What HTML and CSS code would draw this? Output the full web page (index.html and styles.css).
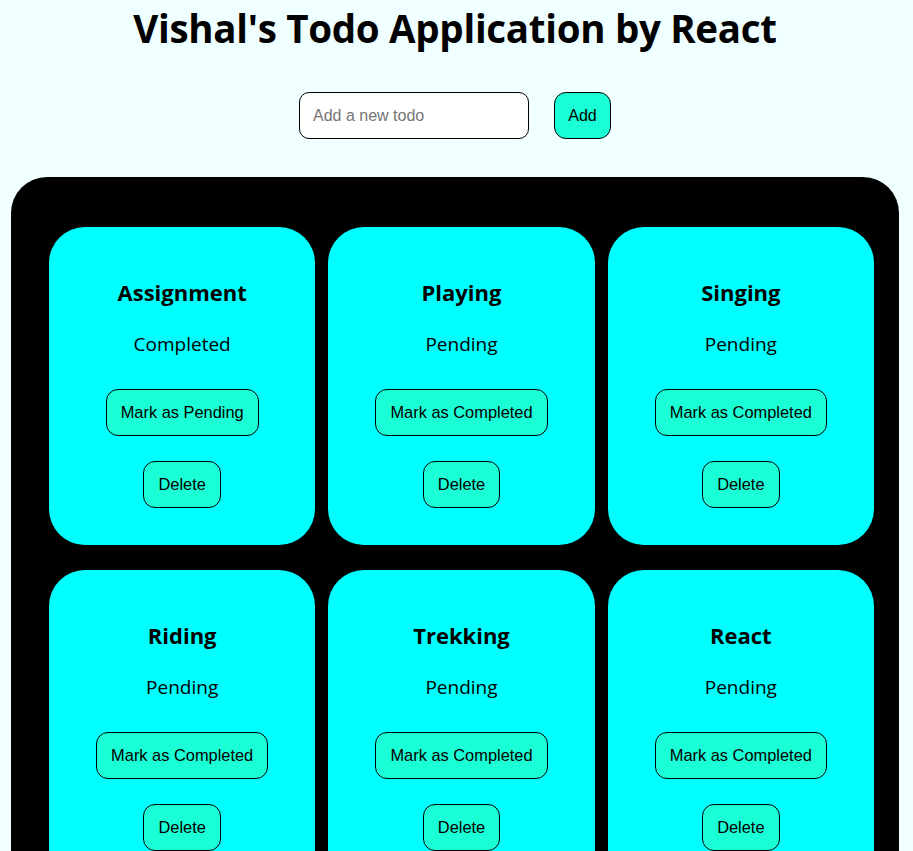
FILE: index.html
```html
<!DOCTYPE html>
<html>
<head>
<meta charset="utf-8">
<link rel="stylesheet" href="styles.css">
</head>
<body>
<div class="app">
  <h1 class="title">Vishal's Todo Application by React</h1>
  <div class="add-row">
    <input class="todo-input" type="text" placeholder="Add a new todo">
    <button class="btn add-btn">Add</button>
  </div>
  <div class="board">
    <div class="card">
      <h3 class="card-title">Assignment</h3>
      <p class="status">Completed</p>
      <button class="btn">Mark as Pending</button>
      <button class="btn">Delete</button>
    </div>
    <div class="card">
      <h3 class="card-title">Playing</h3>
      <p class="status">Pending</p>
      <button class="btn">Mark as Completed</button>
      <button class="btn">Delete</button>
    </div>
    <div class="card">
      <h3 class="card-title">Singing</h3>
      <p class="status">Pending</p>
      <button class="btn">Mark as Completed</button>
      <button class="btn">Delete</button>
    </div>
    <div class="card">
      <h3 class="card-title">Riding</h3>
      <p class="status">Pending</p>
      <button class="btn">Mark as Completed</button>
      <button class="btn">Delete</button>
    </div>
    <div class="card">
      <h3 class="card-title">Trekking</h3>
      <p class="status">Pending</p>
      <button class="btn">Mark as Completed</button>
      <button class="btn">Delete</button>
    </div>
    <div class="card">
      <h3 class="card-title">React</h3>
      <p class="status">Pending</p>
      <button class="btn">Mark as Completed</button>
      <button class="btn">Delete</button>
    </div>
  </div>
</div>
</body>
</html>
```
FILE: styles.css
```css
html, body {
  margin: 0;
  padding: 0;
  background: #f0ffff;
}
body {
  font-family: "Open Sans", "Noto Sans", sans-serif;
  color: #000;
}
.app {
  padding: 0 14px 0 11px;
}
.title {
  margin: 0;
  padding-top: 6px;
  height: 50px;
  line-height: 44px;
  text-align: center;
  font-size: 38.5px;
  font-weight: 700;
  letter-spacing: -0.3px;
}
.add-row {
  display: flex;
  justify-content: center;
  align-items: center;
  gap: 25px;
  margin-top: 36px;
}
.todo-input {
  box-sizing: border-box;
  width: 230px;
  height: 47px;
  border: 1px solid #000;
  border-radius: 10px;
  padding: 0 13px;
  font-family: "Liberation Sans", Arial, sans-serif;
  font-size: 16px;
  background: #fff;
  outline: none;
}
.todo-input::placeholder {
  color: #757575;
}
.btn {
  box-sizing: border-box;
  height: 47px;
  padding: 0 14px;
  border: 1px solid #000;
  border-radius: 12px;
  background: #1affd5;
  color: #000;
  font-family: "Liberation Sans", Arial, sans-serif;
  font-size: 16.4px;
  cursor: pointer;
}
.add-btn {
  width: 57px;
  padding: 0;
  font-size: 16px;
}
.board {
  margin-top: 38px;
  background: #000;
  border-radius: 36px;
  padding: 50px 25px 40px 38px;
  display: grid;
  grid-template-columns: repeat(3, 1fr);
  column-gap: 13px;
  row-gap: 25px;
}
.card {
  background: #00ffff;
  border-radius: 36px;
  height: 318px;
  box-sizing: border-box;
  padding-top: 50px;
  display: flex;
  flex-direction: column;
  align-items: center;
}
.card-title {
  margin: 0;
  height: 30px;
  line-height: 30px;
  font-size: 22px;
  font-weight: 700;
}
.status {
  margin: 23px 0 0;
  height: 28px;
  line-height: 28px;
  font-size: 19px;
  font-weight: 400;
}
.card .btn {
  margin-top: 31px;
}
.card .btn + .btn {
  margin-top: 25px;
}
```
